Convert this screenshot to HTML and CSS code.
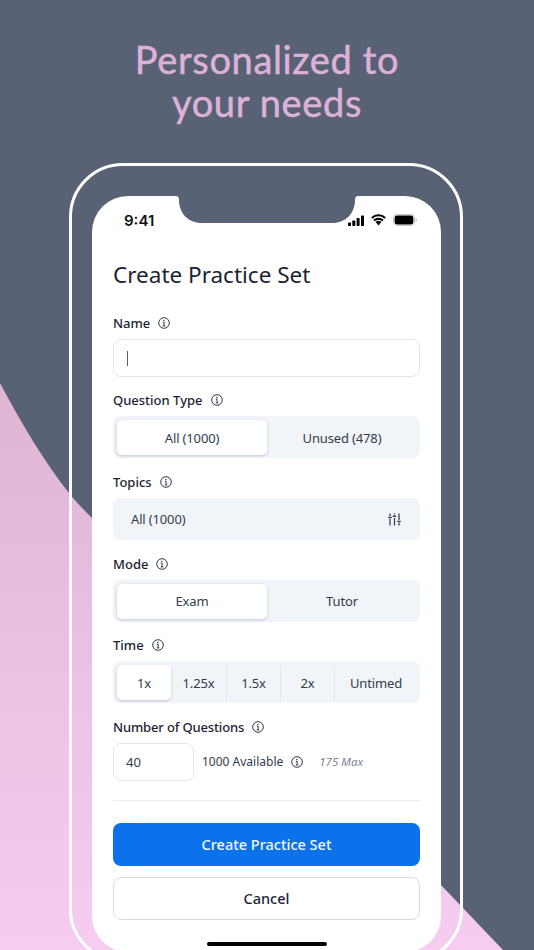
FILE: index.html
```html
<!DOCTYPE html>
<html lang="en">
<head>
<meta charset="utf-8">
<title>Create Practice Set</title>
<link rel="stylesheet" href="styles.css">
</head>
<body>
<main class="page">
  <svg class="backdrop" width="534" height="950" viewBox="0 0 534 950">
    <defs>
      <linearGradient id="pink" x1="0" y1="0" x2="0" y2="1">
        <stop offset="0" stop-color="#dfb4d5"/>
        <stop offset="1" stop-color="#f6cdf1"/>
      </linearGradient>
    </defs>
    <path d="M0 383C22 425 46 464 69 493C76 502 84 510 92 518L441 885L503 950L0 950Z" fill="url(#pink)"/>
  </svg>
  <h1 class="headline">Personalized to<br>your needs</h1>
  <div class="frame">
    <div class="screen">
      <svg class="notch" width="182" height="28" viewBox="0 0 182 28"><path d="M0 0Q3 0 3 4C3 17 12 27 26 27H156C170 27 179 17 179 4Q179 0 182 0Z"/></svg>
      <div class="status">
        <span class="clock">9:41</span>
        <span class="status-icons">
          <svg width="16" height="11" viewBox="0 0 16 11"><rect x="0" y="7.5" width="3" height="3.5" rx=".7"/><rect x="4.3" y="5.5" width="3" height="5.5" rx=".7"/><rect x="8.600" y="3" width="3" height="8" rx=".7"/><rect x="13" y="0.5" width="3" height="10.5" rx=".7"/></svg>
          <svg width="15" height="12" viewBox="0 0 15 12"><path d="M.8 4a9.800 9.800 0 0 1 13.400 0M3 6.500a6.500 6.500 0 0 1 9 0M5.200 8.800a3.300 3.300 0 0 1 4.600 0" fill="none" stroke="#000" stroke-width="2"/><path d="M5.800 9.500l1.700-1.200L9.200 9.500 7.500 11.500Z"/></svg>
          <svg width="24" height="12" viewBox="0 0 24 12"><rect x=".5" y=".5" width="21" height="11" rx="3.400" fill="none" stroke="#c9c9c9"/><rect x="1.600" y="1.600" width="18.800" height="8.800" rx="2.400"/><rect x="22.500" y="4.500" width="1.200" height="3" rx=".6" fill="#bbb"/></svg>
        </span>
      </div>
      <form class="form">
        <h2 class="title">Create Practice Set</h2>

        <div class="field field-first">
          <div class="label">Name <svg class="info"><use href="#i"/></svg></div>
          <div class="input input-wide"><span class="caret"></span></div>
        </div>

        <div class="field field-second">
          <div class="label">Question Type <svg class="info"><use href="#i"/></svg></div>
          <div class="seg seg-two"><span class="opt on">All (1000)</span><span class="opt">Unused (478)</span></div>
        </div>

        <div class="field field-third">
          <div class="label">Topics <svg class="info"><use href="#i"/></svg></div>
          <div class="picker">
            <span>All (1000)</span>
            <svg width="13" height="13" viewBox="0 0 13 13" fill="none" stroke="#2c3546" stroke-width="1.200"><path d="M2 0.500V3M2 6V12.500M6.500 0.500V1.500M6.500 5V12.500M11 0.500V7M11 10V12.500"/><path d="M0.300 4.500H3.700M4.800 3.200H8.200M9.300 8.500H12.700" stroke-width="1.500"/></svg>
          </div>
        </div>

        <div class="field">
          <div class="label">Mode <svg class="info"><use href="#i"/></svg></div>
          <div class="seg seg-two"><span class="opt on">Exam</span><span class="opt">Tutor</span></div>
        </div>

        <div class="field">
          <div class="label">Time <svg class="info"><use href="#i"/></svg></div>
          <div class="seg seg-five">
            <span class="opt on">1x</span><span class="opt">1.25x</span><span class="opt rule">1.5x</span><span class="opt rule">2x</span><span class="opt rule">Untimed</span>
          </div>
        </div>

        <div class="field">
          <div class="label label-tight">Number of Questions <svg class="info"><use href="#i"/></svg></div>
          <div class="count-row">
            <div class="input input-count">40</div>
            <span class="avail">1000 Available</span>
            <svg class="info info-avail"><use href="#i"/></svg>
            <em class="max">175 Max</em>
          </div>
        </div>

        <hr class="divider">
        <button type="button" class="btn btn-primary">Create Practice Set</button>
        <button type="button" class="btn btn-cancel">Cancel</button>
      </form>
      <div class="home"></div>
    </div>
  </div>
  <svg class="defs" width="0" height="0">
    <symbol id="i" viewBox="0 0 12 12">
      <circle cx="6" cy="6" r="5.300" fill="none" stroke="#2f3949" stroke-width="1"/>
      <path d="M4.800 5.200H6.100V8.800M4.700 8.900H7.400" fill="none" stroke="#2f3949" stroke-width="1"/>
      <circle cx="5.900" cy="3.400" r=".75" fill="#2f3949"/>
    </symbol>
  </svg>
</main>
</body>
</html>
```
FILE: styles.css
```css
* { box-sizing: border-box; }
html, body { margin: 0; padding: 0; }
body { width: 534px; height: 950px; overflow: hidden; }
.page {
  position: relative;
  width: 534px;
  height: 950px;
  overflow: hidden;
  background: #586274;
  font-family: "Noto Sans", "Open Sans", sans-serif;
  color: #1b2433;
}
.backdrop { position: absolute; left: 0; top: 0; }
.defs { position: absolute; }
.headline {
  position: relative;
  margin: 0;
  padding-top: 38px;
  height: 163px;
  text-align: center;
  font-family: "Lato", sans-serif;
  font-weight: 400;
  font-size: 38px;
  line-height: 43px;
  letter-spacing: 0.65px;
  -webkit-text-stroke: 0.5px #dcb2d8;
  color: #dcb2d8;
}
.frame {
  position: relative;
  width: 394px;
  height: 800px;
  margin-left: 69px;
  padding: 30px 20px 0;
  border: 3px solid #fff;
  border-radius: 54px;
}
.screen {
  position: relative;
  width: 349px;
  height: 756px;
  background: #fff;
  border-radius: 36px;
  overflow: hidden;
}
.notch {
  position: absolute;
  left: 84px;
  top: 0;
  fill: #586274;
}
.status {
  display: flex;
  justify-content: space-between;
  align-items: center;
  height: 48px;
  padding: 0 23px 0 32px;
}
.clock { font-family: "Inter", sans-serif; font-weight: 600; font-size: 15px; color: #111; }
.status-icons { display: flex; align-items: center; gap: 7px; margin-right: 1px; }
.form { padding: 14px 21px 0; }
.title { margin: 0; font-size: 22.500px; line-height: 34px; font-weight: 400; }
.field { margin-top: 13.500px; }
.field-first { margin-top: 21px; }
.field-second { margin-top: 13px; }
.field-third { margin-top: 14px; }
.label {
  display: flex;
  align-items: center;
  gap: 8px;
  height: 20px;
  margin-bottom: 6px;
  font-size: 13px;
  font-weight: 500;
}
.label-tight { letter-spacing: -0.15px; }
.info { width: 12px; height: 12px; flex: none; }
.input {
  display: flex;
  align-items: center;
  border: 1.500px solid #e2e5ea;
  border-radius: 8px;
  background: #fff;
}
.input-wide { height: 38px; padding-left: 13px; }
.caret { width: 1px; height: 15px; background: #55606f; }
.seg {
  height: 42px;
  padding: 4px 3px 3px 4px;
  border-radius: 8px;
  background: #f1f4f9;
  font-size: 13px;
  letter-spacing: -0.15px;
  color: #333c4b;
}
.seg-two { display: grid; grid-template-columns: 150px 1fr; }
.seg-five { display: grid; grid-template-columns: 54px 55px 54px 54px 1fr; }
.opt { display: flex; align-items: center; justify-content: center; }
.on { background: #fff; border-radius: 5px; box-shadow: 0 1px 3px rgba(70, 85, 110, .28); }
.rule { border-left: 1px solid #e3e6ec; }
.picker {
  display: flex;
  justify-content: space-between;
  align-items: center;
  height: 42px;
  padding: 0 19px 0 18px;
  border-radius: 8px;
  background: #f1f4f9;
  font-size: 13px;
  letter-spacing: -0.15px;
  color: #333c4b;
}
.count-row { display: flex; align-items: center; font-size: 12px; color: #333c4b; }
.input-count { width: 81px; height: 38px; padding-left: 12px; font-size: 13px; }
.avail { margin-left: 8px; }
.info-avail { margin-left: 8px; }
.max { margin-left: 16px; font-size: 11.500px; color: #7a8597; }
.divider { height: 1.500px; margin: 19px 0 22px; border: 0; background: #e9ebef; }
.btn {
  display: block;
  width: 100%;
  height: 43px;
  padding: 0 0 2px;
  border-radius: 8px;
  font-family: inherit;
  font-size: 14.500px;
  font-weight: 500;
}
.btn-primary { border: 0; background: #0c72ec; color: #f3f8ff; }
.btn-cancel { margin-top: 11px; background: #fff; border: 1.500px solid #d9dce3; color: #1b2433; }
.home {
  position: absolute;
  left: 115px;
  top: 746px;
  width: 120px;
  height: 4px;
  border-radius: 2px;
  background: #000;
}
```
